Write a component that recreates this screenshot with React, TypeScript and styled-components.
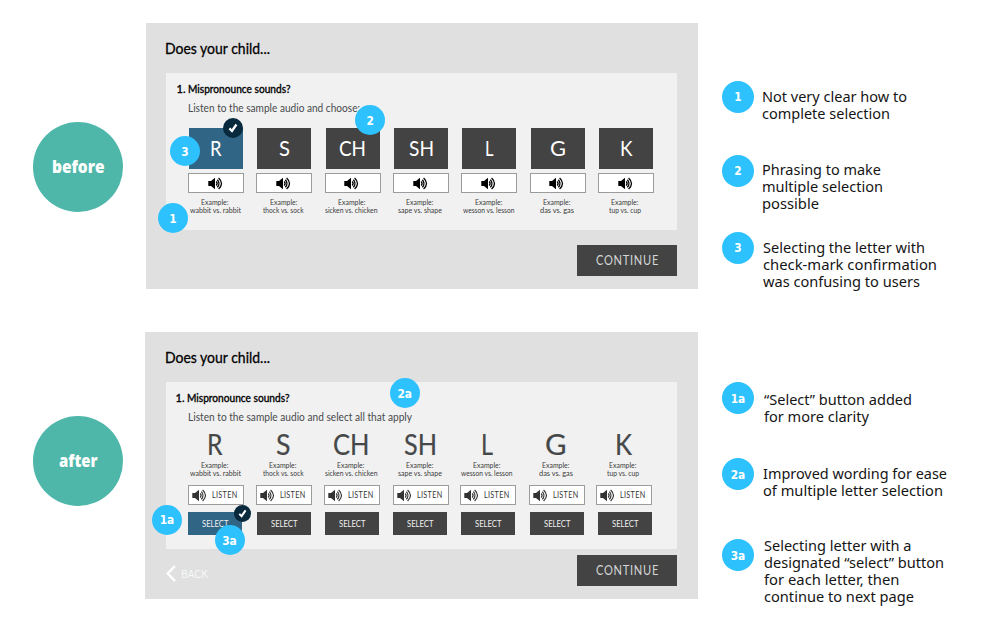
import React, { useLayoutEffect, useRef, useState } from "react";
import styled, { createGlobalStyle } from "styled-components";

const GlobalStyle = createGlobalStyle`
  *, *::before, *::after { box-sizing: border-box; }
  body { margin: 0; background: #fff; }
`;

const futura = `"Lato", "Liberation Sans", sans-serif`;
const humanist = `"Noto Sans", "Open Sans", sans-serif`;

/* ---------- text squeezed or stretched to a set measure ---------- */

const Measure = styled.span<{ $width: number }>`
  display: inline-block;
  vertical-align: top;
  width: ${(p) => p.$width}px;
  text-align: left;
  white-space: nowrap;
`;
const Run = styled.span`
  display: inline-block;
  vertical-align: top;
  transform-origin: 0 50%;
`;

function Fit({ width, children }: { width: number; children: React.ReactNode }) {
  const ref = useRef<HTMLSpanElement>(null);
  const [scale, setScale] = useState(1);
  useLayoutEffect(() => {
    const natural = ref.current?.getBoundingClientRect().width;
    if (natural) setScale(width / natural);
  }, []);
  return (
    <Measure $width={width}>
      <Run ref={ref} style={{ transform: `scaleX(${scale})` }}>
        {children}
      </Run>
    </Measure>
  );
}

/* ---------- page ---------- */

const Page = styled.main`
  width: 993px;
  height: 617px;
  overflow: hidden;
  background: #fff;
  display: flex;
  flex-direction: column;
`;
const Section = styled.section<{ $top: number; $height: number; $left: number }>`
  margin-top: ${(p) => p.$top}px;
  height: ${(p) => p.$height}px;
  flex: none;
  display: grid;
  grid-template-columns: ${(p) => p.$left}px ${(p) => 698 - p.$left}px 1fr;
  grid-template-rows: ${(p) => p.$height}px;
`;
const Stage = styled.div<{ $top: number }>`
  width: 90px;
  height: 90px;
  margin: ${(p) => p.$top}px 0 0 33px;
  padding-bottom: 2px;
  border-radius: 50%;
  background: #4fb7a9;
  color: #fff;
  display: flex;
  align-items: center;
  justify-content: center;
  font: 800 18px/24px "Open Sans", "Noto Sans", sans-serif;
`;

/* ---------- panel ---------- */

const Panel = styled.div`
  position: relative;
  background: #e0e0e0;
  display: flex;
  flex-direction: column;
`;
const Title = styled.h1<{ $left: number }>`
  margin: 15px 0 0 ${(p) => p.$left}px;
  height: 35px;
  flex: none;
  font: 400 16px/20px ${futura};
  color: #000;
  -webkit-text-stroke: 0.3px #000;
`;
const Card = styled.div<{ $left: number; $height: number }>`
  width: 511px;
  height: ${(p) => p.$height}px;
  flex: none;
  margin-left: ${(p) => p.$left}px;
  padding-top: 9px;
  background: #f1f1f1;
  display: flex;
  flex-direction: column;
`;
const Question = styled.h2<{ $left: number }>`
  margin: 0 0 0 ${(p) => p.$left}px;
  font: 400 11px/14px ${futura};
  color: #000;
  -webkit-text-stroke: 0.35px #000;
  display: flex;
  gap: 3px;
`;
const Hint = styled.p`
  margin: 5px 0 0 22px;
  font: 400 11.5px/14px ${futura};
  color: #484a4c;
`;
const Sounds = styled.div<{ $top: number; $columns: string }>`
  margin: ${(p) => p.$top}px 0 0 22px;
  display: grid;
  grid-template-columns: ${(p) => p.$columns};
`;
const Sound = styled.div`
  width: 56px;
  display: flex;
  flex-direction: column;
`;
const Tile = styled.div<{ $on?: boolean }>`
  position: relative;
  width: 54px;
  height: 41px;
  margin-left: 1px;
  background: ${(p) => (p.$on ? "#306586" : "#434343")};
  color: #fff;
  font: 400 20.5px/41px ${futura};
  text-align: center;
`;
const BigLetter = styled.div`
  width: 54px;
  font: 400 28px/28px ${futura};
  color: #454748;
  text-align: center;
  -webkit-text-stroke: 0.2px #454748;
`;
const Box = styled.button<{ $top: number }>`
  width: 56px;
  height: 20px;
  flex: none;
  margin: ${(p) => p.$top}px 0 0;
  padding: 0 2px 0 0;
  border: 1px solid #9c9c9c;
  background: #fff;
  color: #333;
  display: flex;
  align-items: center;
  justify-content: center;
  gap: 5px;
  font: 400 8.5px/12px ${futura};
  letter-spacing: 0.4px;
`;
const Example = styled.div<{ $top: number }>`
  margin-top: ${(p) => p.$top}px;
  width: 54px;
  font: 400 7.5px/8px ${futura};
  color: #3c3c3c;
  display: flex;
  flex-direction: column;
  align-items: center;
`;
const Select = styled.button<{ $on?: boolean; $left: number }>`
  position: relative;
  width: 54px;
  height: 23.5px;
  margin: 6.5px 0 0 ${(p) => p.$left}px;
  padding: 0;
  border: 0;
  background: ${(p) => (p.$on ? "#306586" : "#434343")};
  color: #f0f0f0;
  font: 400 10px/23px ${futura};
  text-align: center;
`;
const Footer = styled.div<{ $top: number; $left: number }>`
  margin: ${(p) => p.$top}px 21px 0 ${(p) => p.$left}px;
  display: flex;
  justify-content: space-between;
  align-items: flex-start;
`;
const Back = styled.a`
  display: flex;
  align-items: center;
  gap: 5px;
  height: 17px;
  margin-top: 10px;
  color: #f5f8f5;
  font: 400 12px/17px ${futura};
`;
const Continue = styled.button`
  width: 100px;
  height: 31px;
  margin-left: auto;
  padding: 0;
  border: 0;
  background: #434343;
  color: #d3d6d6;
  font: 400 12.5px/31px ${futura};
  letter-spacing: 0.8px;
`;

/* ---------- badges ---------- */

const Badge = styled.span<{ $size: number }>`
  flex: none;
  width: ${(p) => p.$size}px;
  height: ${(p) => p.$size}px;
  padding-top: 1px;
  border-radius: 50%;
  background: #2dc1fe;
  color: #fff;
  display: flex;
  align-items: center;
  justify-content: center;
  font: 700 11.8px/16px "DejaVu Sans Condensed", "DejaVu Sans", ${humanist};
  font-stretch: condensed;
`;
const Pin = styled(Badge)<{ $x: number; $y: number }>`
  position: absolute;
  z-index: 2;
  left: ${(p) => p.$x - 15}px;
  top: ${(p) => p.$y - 15}px;
`;
const Tick = styled.span<{ $size: number; $right: number; $top: number }>`
  position: absolute;
  right: ${(p) => p.$right}px;
  top: ${(p) => p.$top}px;
  width: ${(p) => p.$size}px;
  height: ${(p) => p.$size}px;
  border-radius: 50%;
  background: #09293d;
  display: flex;
  align-items: center;
  justify-content: center;
`;

/* ---------- notes ---------- */

const Notes = styled.div`
  padding-left: 24px;
  display: flex;
  flex-direction: column;
`;
const Note = styled.div<{ $height: number; $badgeTop: number }>`
  height: ${(p) => p.$height}px;
  display: flex;
  align-items: flex-start;
  flex: none;
  ${Badge} { margin-top: ${(p) => p.$badgeTop}px; }
`;
const NoteText = styled.p<{ $top: number; $left: number }>`
  margin: ${(p) => p.$top}px 0 0 ${(p) => p.$left}px;
  font: 400 15px/17px ${humanist};
  color: #151515;
  display: flex;
  flex-direction: column;
`;

/* ---------- drawings ---------- */

const Speaker = ({ color, weight }: { color: string; weight: number }) => (
  <svg width="15" height="13" viewBox="0 0 15 13" fill="none" stroke={color} strokeWidth={weight}>
    <path d="M0.3 4H3L7 0.8V12.2L3 9H0.3Z" fill={color} stroke="none" />
    <path d="M8.2 4.5Q10 6.5 8.2 8.5" />
    <path d="M9.3 2.7Q12.8 6.5 9.3 10.3" />
    <path d="M10.6 1Q16.4 6.5 10.6 12" />
  </svg>
);

const Check = ({ size }: { size: number }) => (
  <svg width={size} height={size} viewBox="0 0 10 10" fill="none">
    <path d="M1.4 5.4L4 8L8.4 1.5" stroke="#fff" strokeWidth="2.3" />
  </svg>
);

const Chevron = () => (
  <svg width="10" height="17" viewBox="0 0 10 17" fill="none">
    <path d="M9 1L1.6 8.5L9 16" stroke="#fff" strokeWidth="2.4" />
  </svg>
);

/* ---------- data ---------- */

const sounds = [
  { letter: "R", tile: 11.5, big: 15.5, example: "wabbit vs. rabbit", width: 51, nudge: 0 },
  { letter: "S", tile: 11, big: 14.5, example: "thock vs. sock", width: 40.5, nudge: 1 },
  { letter: "CH", tile: 27, big: 36.5, example: "sicken vs. chicken", width: 52.5, nudge: 1 },
  { letter: "SH", tile: 25, big: 33, example: "sape vs. shape", width: 44, nudge: 0 },
  { letter: "L", tile: 8.5, big: 12, example: "wesson vs. lesson", width: 51.5, nudge: 1 },
  { letter: "G", tile: 16, big: 21.5, example: "das vs. gas", width: 34, nudge: 1 },
  { letter: "K", tile: 12.5, big: 17, example: "tup vs. cup", width: 32, nudge: 2 },
];

type NoteData = {
  badge: string;
  height: number;
  badgeTop: number;
  top: number;
  left: number;
  lines: [string, number][];
};

const beforeNotes: NoteData[] = [
  { badge: "1", height: 74, badgeTop: 0, top: 7, left: 7.5,
    lines: [["Not very clear how to", 145], ["complete selection", 128]] },
  { badge: "2", height: 77, badgeTop: 0, top: 6, left: 7.5,
    lines: [["Phrasing to make", 119], ["multiple selection", 121], ["possible", 57]] },
  { badge: "3", height: 60, badgeTop: 0, top: 7, left: 9,
    lines: [["Selecting the letter with", 162], ["check-mark confirmation", 174], ["was confusing to users", 157]] },
];

const afterNotes: NoteData[] = [
  { badge: "1a", height: 76, badgeTop: 0, top: 8.7, left: 9.7,
    lines: [["“Select” button added", 148], ["for more clarity", 105]] },
  { badge: "2a", height: 78, badgeTop: 0, top: 7, left: 9.2,
    lines: [["Improved wording for ease", 184], ["of multiple letter selection", 180]] },
  { badge: "3a", height: 80, badgeTop: 3, top: 1, left: 9.7,
    lines: [["Selecting letter with a", 147.5], ["designated “select” button", 180], ["for each letter, then", 135.5], ["continue to next page", 150]] },
];

const NoteList = ({ notes }: { notes: NoteData[] }) => (
  <>
    {notes.map((n) => (
      <Note key={n.badge} $height={n.height} $badgeTop={n.badgeTop}>
        <Badge $size={32}>{n.badge}</Badge>
        <NoteText $top={n.top} $left={n.left}>
          {n.lines.map(([text, width]) => (
            <Fit key={text} width={width}>{text}</Fit>
          ))}
        </NoteText>
      </Note>
    ))}
  </>
);

const BeforeNotes = styled(Notes)`padding-top: 57.5px;`;
const AfterNotes = styled(Notes)`padding-top: 50.3px;`;

const Heading = ({ left }: { left: number }) => (
  <Question $left={left}>
    <span>1.</span>
    <Fit width={102.5}>Mispronounce sounds?</Fit>
  </Question>
);

const Sample = ({ top, text, width }: { top: number; text: string; width: number }) => (
  <Example $top={top}>
    <Fit width={27.5}>Example:</Fit>
    <Fit width={width}>{text}</Fit>
  </Example>
);

export default function App() {
  return (
    <Page>
      <GlobalStyle />
      <Section $top={23} $height={266} $left={146}>
        <Stage $top={99}><Fit width={52.5}>before</Fit></Stage>
        <Panel>
          <Title $left={19}><Fit width={105}>Does your child...</Fit></Title>
          <Card $left={20} $height={157}>
            <Heading left={10.5} />
            <Hint><Fit width={172}>Listen to the sample audio and choose:</Fit></Hint>
            <Sounds $top={13} $columns="repeat(7, 68.35px)">
              {sounds.map((s, i) => (
                <Sound key={s.letter}>
                  <Tile $on={i === 0}>
                    <Fit width={s.tile}>{s.letter}</Fit>
                    {i === 0 && <Tick $size={20} $right={0} $top={-10}><Check size={10} /></Tick>}
                  </Tile>
                  <Box $top={4}><Speaker color="#000" weight={1.3} /></Box>
                  <Sample top={5.7} text={s.example} width={s.width} />
                </Sound>
              ))}
            </Sounds>
          </Card>
          <Footer $top={15} $left={20}><Continue><Fit width={63}>CONTINUE</Fit></Continue></Footer>
          <Pin $size={30} $x={39} $y={128}>3</Pin>
          <Pin $size={30} $x={27} $y={195}>1</Pin>
          <Pin $size={30} $x={224.3} $y={97}>2</Pin>
        </Panel>
        <BeforeNotes><NoteList notes={beforeNotes} /></BeforeNotes>
      </Section>

      <Section $top={43} $height={267} $left={145}>
        <Stage $top={84}><Fit width={38.5}>after</Fit></Stage>
        <Panel>
          <Title $left={20}><Fit width={105}>Does your child...</Fit></Title>
          <Card $left={21} $height={167}>
            <Heading left={9.5} />
            <Hint><Fit width={224}>Listen to the sample audio and select all that apply</Fit></Hint>
            <Sounds $top={6} $columns="68px 68px 69px 67px 69px 67px 56px">
              {sounds.map((s, i) => (
                <Sound key={s.letter}>
                  <BigLetter><Fit width={s.big}>{s.letter}</Fit></BigLetter>
                  <Sample top={4} text={s.example} width={s.width} />
                  <Box $top={7}><Speaker color="#333" weight={1.15} /><Fit width={25.5}>LISTEN</Fit></Box>
                  <Select $on={i === 0} $left={s.nudge}>
                    <Fit width={26.5}>SELECT</Fit>
                    {i === 0 && <Tick $size={17} $right={-9} $top={-6.5}><Check size={9} /></Tick>}
                  </Select>
                </Sound>
              ))}
            </Sounds>
          </Card>
          <Footer $top={6} $left={21}>
            <Back><Chevron /><Fit width={27}>BACK</Fit></Back>
            <Continue><Fit width={63}>CONTINUE</Fit></Continue>
          </Footer>
          <Pin $size={30} $x={259.7} $y={61.3}>2a</Pin>
          <Pin $size={30} $x={22} $y={187.5}>1a</Pin>
          <Pin $size={30} $x={84.5} $y={208.3}>3a</Pin>
        </Panel>
        <AfterNotes><NoteList notes={afterNotes} /></AfterNotes>
      </Section>
    </Page>
  );
}
